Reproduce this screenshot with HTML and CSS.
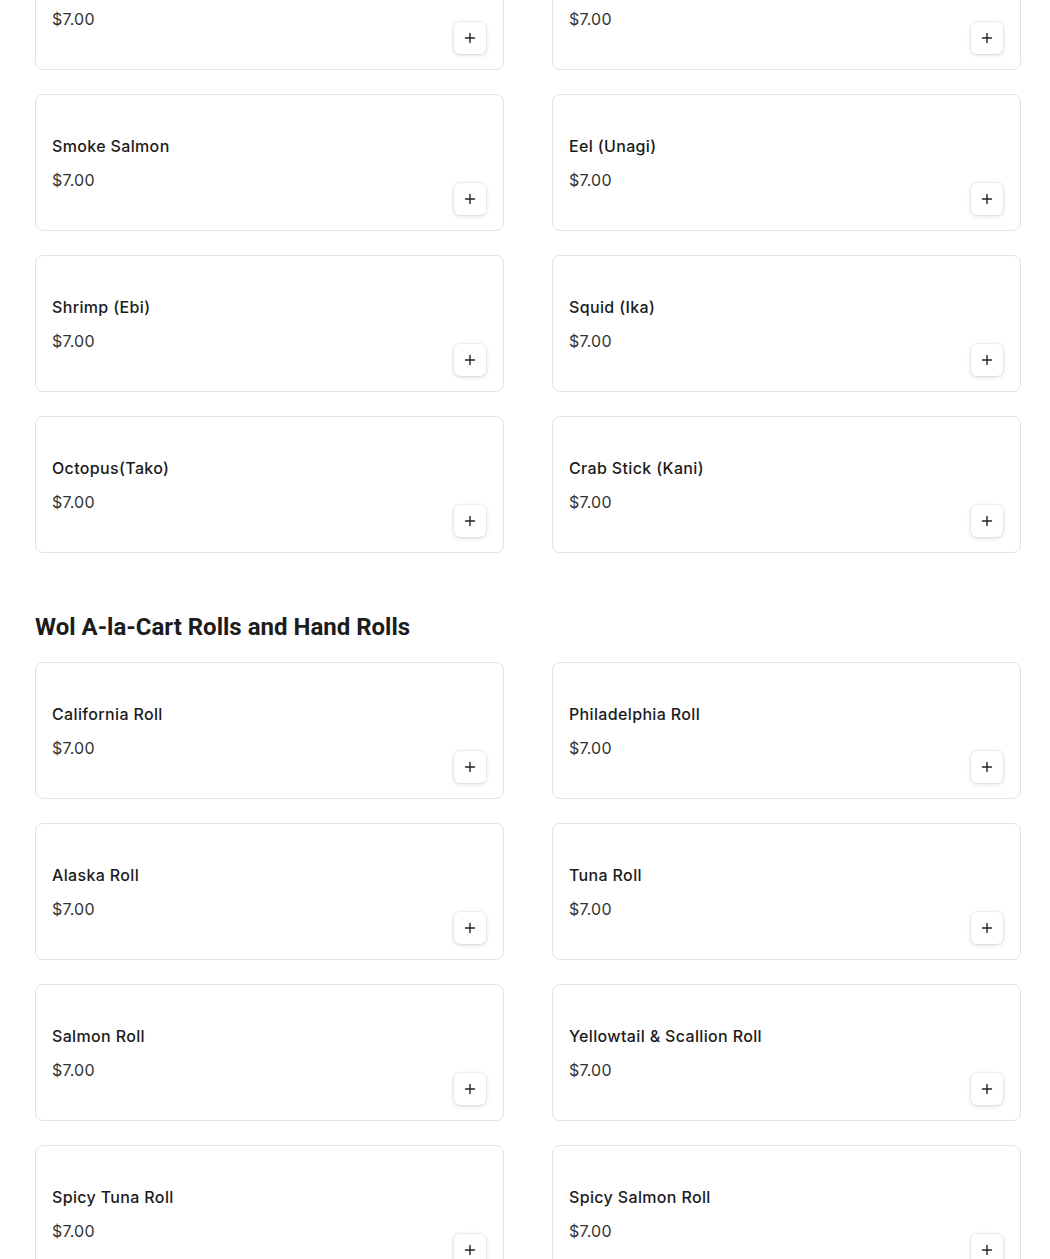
FILE: index.html
```html
<!DOCTYPE html>
<html lang="en">
<head>
<meta charset="utf-8">
<title>Menu</title>
<link rel="stylesheet" href="styles.css">
</head>
<body>
<main class="menu">
  <section class="section section-first">
    <div class="grid">
      <div class="card"><div class="info"><div class="name"></div><div class="price">$7.00</div></div><button class="add" aria-label="Add"><svg viewBox="0 0 12 12" width="12" height="12"><path d="M6 1.5v9M1.5 6h9" stroke="#222" stroke-width="1.4" stroke-linecap="round"/></svg></button></div>
      <div class="card"><div class="info"><div class="name"></div><div class="price">$7.00</div></div><button class="add" aria-label="Add"><svg viewBox="0 0 12 12" width="12" height="12"><path d="M6 1.5v9M1.5 6h9" stroke="#222" stroke-width="1.4" stroke-linecap="round"/></svg></button></div>
      <div class="card"><div class="info"><div class="name">Smoke Salmon</div><div class="price">$7.00</div></div><button class="add" aria-label="Add"><svg viewBox="0 0 12 12" width="12" height="12"><path d="M6 1.5v9M1.5 6h9" stroke="#222" stroke-width="1.4" stroke-linecap="round"/></svg></button></div>
      <div class="card"><div class="info"><div class="name">Eel (Unagi)</div><div class="price">$7.00</div></div><button class="add" aria-label="Add"><svg viewBox="0 0 12 12" width="12" height="12"><path d="M6 1.5v9M1.5 6h9" stroke="#222" stroke-width="1.4" stroke-linecap="round"/></svg></button></div>
      <div class="card"><div class="info"><div class="name">Shrimp (Ebi)</div><div class="price">$7.00</div></div><button class="add" aria-label="Add"><svg viewBox="0 0 12 12" width="12" height="12"><path d="M6 1.5v9M1.5 6h9" stroke="#222" stroke-width="1.4" stroke-linecap="round"/></svg></button></div>
      <div class="card"><div class="info"><div class="name">Squid (Ika)</div><div class="price">$7.00</div></div><button class="add" aria-label="Add"><svg viewBox="0 0 12 12" width="12" height="12"><path d="M6 1.5v9M1.5 6h9" stroke="#222" stroke-width="1.4" stroke-linecap="round"/></svg></button></div>
      <div class="card"><div class="info"><div class="name">Octopus(Tako)</div><div class="price">$7.00</div></div><button class="add" aria-label="Add"><svg viewBox="0 0 12 12" width="12" height="12"><path d="M6 1.5v9M1.5 6h9" stroke="#222" stroke-width="1.4" stroke-linecap="round"/></svg></button></div>
      <div class="card"><div class="info"><div class="name">Crab Stick (Kani)</div><div class="price">$7.00</div></div><button class="add" aria-label="Add"><svg viewBox="0 0 12 12" width="12" height="12"><path d="M6 1.5v9M1.5 6h9" stroke="#222" stroke-width="1.4" stroke-linecap="round"/></svg></button></div>
    </div>
  </section>
  <section class="section">
    <h2 class="section-title">Wol A-la-Cart Rolls and Hand Rolls</h2>
    <div class="grid">
      <div class="card"><div class="info"><div class="name">California Roll</div><div class="price">$7.00</div></div><button class="add" aria-label="Add"><svg viewBox="0 0 12 12" width="12" height="12"><path d="M6 1.5v9M1.5 6h9" stroke="#222" stroke-width="1.4" stroke-linecap="round"/></svg></button></div>
      <div class="card"><div class="info"><div class="name">Philadelphia Roll</div><div class="price">$7.00</div></div><button class="add" aria-label="Add"><svg viewBox="0 0 12 12" width="12" height="12"><path d="M6 1.5v9M1.5 6h9" stroke="#222" stroke-width="1.4" stroke-linecap="round"/></svg></button></div>
      <div class="card"><div class="info"><div class="name">Alaska Roll</div><div class="price">$7.00</div></div><button class="add" aria-label="Add"><svg viewBox="0 0 12 12" width="12" height="12"><path d="M6 1.5v9M1.5 6h9" stroke="#222" stroke-width="1.4" stroke-linecap="round"/></svg></button></div>
      <div class="card"><div class="info"><div class="name">Tuna Roll</div><div class="price">$7.00</div></div><button class="add" aria-label="Add"><svg viewBox="0 0 12 12" width="12" height="12"><path d="M6 1.5v9M1.5 6h9" stroke="#222" stroke-width="1.4" stroke-linecap="round"/></svg></button></div>
      <div class="card"><div class="info"><div class="name">Salmon Roll</div><div class="price">$7.00</div></div><button class="add" aria-label="Add"><svg viewBox="0 0 12 12" width="12" height="12"><path d="M6 1.5v9M1.5 6h9" stroke="#222" stroke-width="1.4" stroke-linecap="round"/></svg></button></div>
      <div class="card"><div class="info"><div class="name">Yellowtail &amp; Scallion Roll</div><div class="price">$7.00</div></div><button class="add" aria-label="Add"><svg viewBox="0 0 12 12" width="12" height="12"><path d="M6 1.5v9M1.5 6h9" stroke="#222" stroke-width="1.4" stroke-linecap="round"/></svg></button></div>
      <div class="card"><div class="info"><div class="name">Spicy Tuna Roll</div><div class="price">$7.00</div></div><button class="add" aria-label="Add"><svg viewBox="0 0 12 12" width="12" height="12"><path d="M6 1.5v9M1.5 6h9" stroke="#222" stroke-width="1.4" stroke-linecap="round"/></svg></button></div>
      <div class="card"><div class="info"><div class="name">Spicy Salmon Roll</div><div class="price">$7.00</div></div><button class="add" aria-label="Add"><svg viewBox="0 0 12 12" width="12" height="12"><path d="M6 1.5v9M1.5 6h9" stroke="#222" stroke-width="1.4" stroke-linecap="round"/></svg></button></div>
    </div>
  </section>
</main>
</body>
</html>
```
FILE: styles.css
```css
* { box-sizing: border-box; }
html, body { margin: 0; padding: 0; background: #fff; }
body { font-family: Inter, "Open Sans", sans-serif; color: #1a1a1a; overflow: hidden; }
.menu { width: 986px; margin-left: 35px; margin-top: -67px; }
.grid { display: grid; grid-template-columns: 1fr 1fr; column-gap: 48px; row-gap: 24px; }
.card {
  height: 137px;
  border: 1px solid #e3e3e3;
  border-radius: 8px;
  padding: 16px 17px 15px 16px;
  display: flex;
  justify-content: space-between;
  align-items: flex-end;
  background: #fff;
}
.info { align-self: flex-start; padding-top: 23px; }
.name { min-height: 24px; font-size: 16px; line-height: 24px; font-weight: 500; color: #1b1b1b; letter-spacing: 0.35px; }
.price { margin-top: 10px; font-size: 16px; line-height: 24px; font-weight: 400; color: #333; letter-spacing: 0.2px; }
.add {
  width: 32px; height: 32px;
  border: none; border-radius: 6px;
  background: #fff;
  box-shadow: 0 1px 4px rgba(0,0,0,0.16), 0 0 0 1px rgba(0,0,0,0.03);
  display: flex; align-items: center; justify-content: center;
  padding: 0; cursor: pointer;
}
.section-title {
  font-family: Roboto, "Liberation Sans", sans-serif;
  font-weight: 700; font-size: 24px; line-height: 32px;
  color: #1c1c1c; margin: 58px 0 19px 0;
}
```
